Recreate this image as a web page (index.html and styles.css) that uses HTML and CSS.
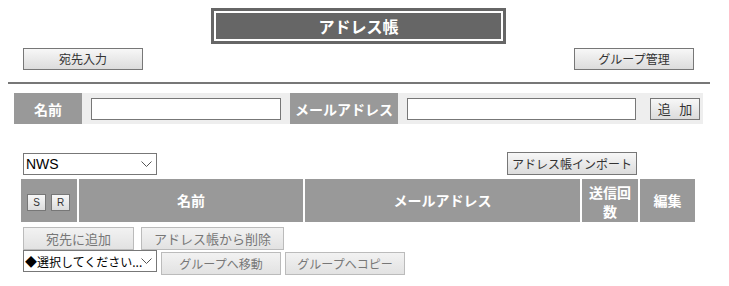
FILE: index.html
```html
<!DOCTYPE html>
<html lang="ja">
<head>
    <meta charset="UTF-8">
    <title>アドレス帳</title>
    <link rel="stylesheet" href="styles.css">
</head>
<body>
<div class="page">
    <div class="title-row">
        <div class="title-frame">
            <h1 class="title">アドレス帳</h1>
        </div>
    </div>
    <div class="top-buttons">
        <button class="btn btn-wide">宛先入力</button>
        <button class="btn btn-wide">グループ管理</button>
    </div>
    <hr class="rule">

    <form class="entry" action="">
        <label class="entry-label label-name" for="name">名前</label>
        <input class="entry-input input-name" type="text" id="name">
        <label class="entry-label label-mail" for="mail">メールアドレス</label>
        <input class="entry-input input-mail" type="text" id="mail">
        <button class="btn btn-add" type="button">追&nbsp;&nbsp;&nbsp;加</button>
    </form>

    <div class="list-tools">
        <div class="select-box">
            <select class="group-select">
                <option>NWS</option>
            </select>
            <svg class="chevron" width="11" height="7" viewBox="0 0 11 7"><path d="M0.5 0.5 L5.5 5.5 L10.5 0.5" fill="none" stroke="#555" stroke-width="1"/></svg>
        </div>
        <button class="btn btn-import">アドレス帳インポート</button>
    </div>

    <div class="list-head">
        <div class="col col-check">
            <button class="btn btn-mini">S</button>
            <button class="btn btn-mini">R</button>
        </div>
        <div class="col">名前</div>
        <div class="col">メールアドレス</div>
        <div class="col col-count">送信回<br>数</div>
        <div class="col">編集</div>
    </div>

    <div class="actions">
        <div class="action-row">
            <button class="btn btn-off btn-to">宛先に追加</button>
            <button class="btn btn-off btn-del">アドレス帳から削除</button>
        </div>
        <div class="action-row row-2">
            <div class="select-box">
                <select class="move-select">
                    <option>◆選択してください...</option>
                </select>
                <svg class="chevron" width="11" height="7" viewBox="0 0 11 7"><path d="M0.5 0.5 L5.5 5.5 L10.5 0.5" fill="none" stroke="#555" stroke-width="1"/></svg>
            </div>
            <button class="btn btn-off btn-group">グループへ移動</button>
            <button class="btn btn-off btn-group">グループへコピー</button>
        </div>
    </div>
</div>
</body>
</html>
```

FILE: styles.css
```css
body {
    margin: 8px;
    font-family: "Noto Sans CJK JP", "Liberation Sans", sans-serif;
    color: #333;
    background: #fff;
}
.page {
    width: 702px;
}
.title-row {
    display: flex;
    justify-content: center;
}
.title-frame {
    margin-left: -1px;
    padding: 3px;
    background: #666;
}
.title {
    margin: 0;
    width: 285px;
    height: 26px;
    line-height: 26px;
    text-align: center;
    font-size: 16px;
    font-weight: bold;
    color: #fff;
    background: #666;
    border: 2px solid #fff;
}
.btn {
    font-family: "Noto Sans CJK JP", "Liberation Sans", sans-serif;
    font-size: 12px;
    color: #333;
    background: linear-gradient(#f7f7f7, #dcdcdc);
    border: 1px solid #777;
    border-radius: 0;
    padding: 0;
    line-height: 20px;
    height: 22px;
    cursor: pointer;
}
.top-buttons {
    display: flex;
    justify-content: space-between;
    padding: 0 16px 0 15px;
    margin-top: 4px;
}
.btn-wide {
    width: 120px;
}
.rule {
    margin: 12px 0 0 0;
    border: none;
    border-top: 2px solid #777;
    height: 0;
}
.entry {
    display: flex;
    align-items: center;
    margin: 9px 0 0 6px;
    width: 689px;
    height: 31px;
    background: #eee;
}
.entry-label {
    align-self: stretch;
    display: flex;
    align-items: center;
    justify-content: center;
    background: #999;
    color: #fff;
    font-size: 14px;
    font-weight: bold;
}
.label-name {
    width: 68px;
}
.label-mail {
    width: 108px;
    margin-left: 9px;
}
.entry-input {
    box-sizing: border-box;
    height: 22px;
    margin: 0;
    border: 1px solid #777;
    background: #fff;
}
.input-name {
    width: 190px;
    margin-left: 9px;
}
.input-mail {
    width: 229px;
    margin-left: 9px;
}
.btn-add {
    width: 50px;
    margin-left: 14px;
    font-size: 13px;
}
.list-tools {
    display: flex;
    justify-content: space-between;
    align-items: center;
    margin: 28px 0 0 15px;
    width: 614px;
}
.select-box {
    position: relative;
    width: 134px;
    height: 22px;
}
.chevron {
    position: absolute;
    right: 5px;
    top: 8px;
    pointer-events: none;
}
.group-select,
.move-select {
    display: block;
    appearance: none;
    box-sizing: border-box;
    width: 134px;
    height: 22px;
    margin: 0;
    font-family: "Liberation Sans", "Noto Sans CJK JP", sans-serif;
    font-size: 14px;
    color: #000;
    border: 1px solid #777;
    border-radius: 0;
    background: #fff;
    padding: 0 18px 0 2px;
}
.btn-import {
    width: 130px;
    height: 23px;
}
.list-head {
    display: grid;
    grid-template-columns: 56px 224px 275px 56px 55px;
    column-gap: 2px;
    margin: 4px 0 0 13px;
    height: 43px;
}
.col {
    background: #999;
    color: #fff;
    font-size: 14px;
    font-weight: bold;
    display: flex;
    align-items: center;
    justify-content: center;
    text-align: center;
    line-height: 19px;
}
.col-check {
    justify-content: flex-start;
    align-items: flex-start;
    gap: 5px;
    padding: 15px 0 0 6px;
    box-sizing: border-box;
}
.btn-mini {
    width: 19px;
    height: 17px;
    line-height: 15px;
    font-family: "Liberation Sans", sans-serif;
    font-size: 10px;
}
.col-count {
    padding-top: 2px;
}
.actions {
    margin: 5px 0 0 15px;
}
.action-row {
    display: flex;
    gap: 7px;
}
.btn-off {
    color: #777;
    border-color: #bbb;
    background: linear-gradient(#f2f2f2, #e2e2e2);
    height: 23px;
    font-size: 13px;
}
.btn-to {
    width: 111px;
}
.btn-del {
    width: 143px;
}
.row-2 {
    gap: 4px;
    align-items: flex-start;
}
.move-select {
    font-family: "Noto Sans CJK JP", sans-serif;
    font-size: 12px;
    padding: 0 14px 0 1px;
}
.btn-group {
    width: 120px;
    margin-top: 2px;
    font-size: 12px;
}
```
